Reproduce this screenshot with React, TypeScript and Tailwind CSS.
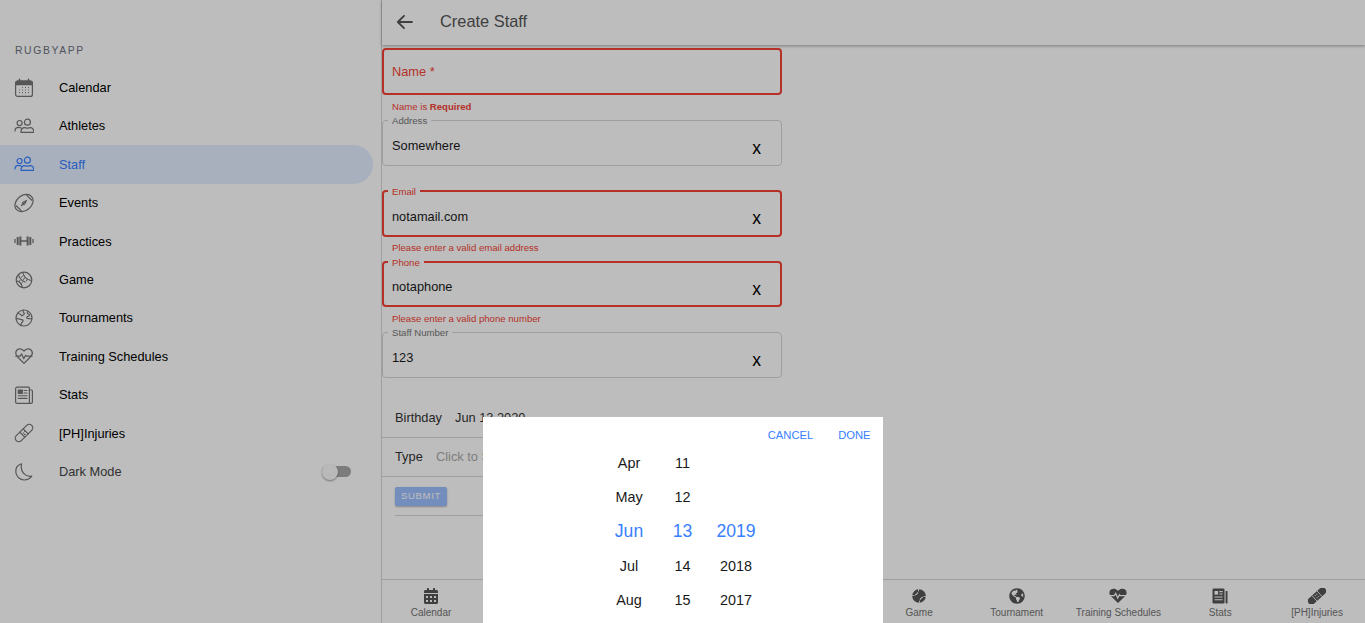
import { ReactNode } from 'react'
import {
  FaBaseballBall,
  FaCalendarAlt,
  FaDumbbell,
  FaFootballBall,
  FaGlobeAmericas,
  FaUserFriends,
} from 'react-icons/fa'

const Ico = ({ children }: { children: ReactNode }) => (
  <svg width="20" height="20" viewBox="0 0 20 20" fill="none" stroke="currentColor" strokeWidth="1.2" strokeLinecap="round" strokeLinejoin="round">
    {children}
  </svg>
)

const CalendarIcon = () => (
  <Ico>
    <rect x="1.6" y="3" width="16.8" height="15.4" rx="2" />
    <path d="M1.8 6.6V5a2 2 0 0 1 2-2h12.4a2 2 0 0 1 2 2v1.6z" fill="currentColor" />
    <path d="M5.5 1.4v2M14.5 1.4v2" strokeWidth="1.6" />
    <path d="M8 9.5h.9M11 9.5h.9M14 9.5h.9M5 12h.9M8 12h.9M11 12h.9M14 12h.9M5 14.6h.9M8 14.6h.9M11 14.6h.9M14 14.6h.9" strokeWidth="1.1" strokeLinecap="butt" />
  </Ico>
)

const PeopleIcon = () => (
  <Ico>
    <circle cx="5.6" cy="7" r="2.5" />
    <circle cx="13.4" cy="6.2" r="3" />
    <path d="M1 15c0-2.4 1.600-3.600 3.600-3.600 1.200 0 2 .2 2.800 .8" />
    <path d="M7 16.400c-.2-2.900 1.600-4.700 3.500-4.700 1 0 1.700 .5 2.900 .5s1.900-.5 2.900-.5c1.900 0 3.700 1.800 3.500 4.700z" />
  </Ico>
)

const FootballIcon = () => (
  <Ico>
    <ellipse cx="10" cy="10" rx="10" ry="7.5" transform="rotate(-40 10 10)" />
    <path d="M12.800 2.400l5 4.800M2.200 12.800l5 4.800" />
    <path d="M7.600 12.400l4.800-4.800M8.600 9.800l1.600 1.600M10 8.400l1.600 1.600" strokeWidth="1.400" />
  </Ico>
)

const DumbbellIcon = () => (
  <Ico>
    <path d="M1 8.500v3M19 8.500v3" strokeWidth="1.300" />
    <path d="M3.700 6v8M6.400 5.500v9M13.600 5.500v9M16.300 6v8" strokeWidth="2" strokeLinecap="butt" />
    <path d="M6.400 10h7.200" strokeWidth="1.300" />
  </Ico>
)

const BaseballIcon = () => (
  <Ico>
    <circle cx="10" cy="10" r="7.800" />
    <path d="M4.500 4.500c.6 3.500 3 6.200 6.500 7.500M9 3c.5 3 2.500 6 8 7.500M3 11c2.500 .6 4.500 2.500 5.400 6.300" />
    <path d="M7 7.500l1.400-1M9.500 9.500l1-1.400M12.500 11l.6-1.500M5 11.500l1-1.200M7 13.500l1.200-1" strokeWidth="1" />
  </Ico>
)

const GlobeIcon = () => (
  <Ico>
    <circle cx="10" cy="10" r="8" />
    <path d="M4 4.800c1 1 1.500 1 2.500 1.500.8 .4 .5 1.400 1.300 1.500 1 .1 1.400-1 2.200-1.600 .8-.6 .2-1.400-.5-1.800-.6-.3-.4-1.700-.2-2.400" />
    <path d="M2.300 11c1.400-.8 2.600-.4 3.900 .2 1.300 .6 2.900 .2 2.900 1.300 0 1.500-1.400 1.700-1.700 3-.2 .9-.6 1.800-.8 2" />
    <path d="M14 3.200c-1.200 1.200-.8 2.500 .4 2.800 .9 .2 1.200 1.200 .8 1.800-.4 .7-1.600 .4-2.200 1.100-.7 .8 .2 1.600 1.200 1.700 1 .1 2 .2 3.500 .1" />
  </Ico>
)

const HeartRateIcon = () => (
  <Ico>
    <path d="M10 17.400L3.700 11C1.300 8.600 1.200 5.800 3 4c1.800-1.800 4.600-1.600 7 1 2.400-2.600 5.200-2.800 7-1 1.800 1.800 1.700 4.600-.7 7z" />
    <path d="M1.800 10.200h4.400l1.400-2.400 2.200 5 1.800-3.500 .8 .9h5.700" />
  </Ico>
)

const NewsIcon = () => (
  <Ico>
    <path d="M3.200 2.200h11.400a.8 .8 0 0 1 .8 .8v15.400H3.200a1.600 1.600 0 0 1-1.600-1.600V3.800a1.600 1.600 0 0 1 1.600-1.600z" />
    <path d="M15.400 5h2a1 1 0 0 1 1 1v11a1.400 1.400 0 0 1-1.400 1.400h-1.600" />
    <rect x="4.300" y="5" width="4" height="3.400" fill="currentColor" />
    <path d="M10 5.500h3M10 8h3M4.300 10.800h8.700M4.300 13.400h8.700" strokeWidth="1.100" />
  </Ico>
)

const BandIcon = () => (
  <Ico>
    <path d="M2.300 12.700L12.700 2.300a3.500 3.500 0 0 1 5 5L7.300 17.700a3.500 3.500 0 0 1-5-5z" />
    <path d="M5.800 9.200l5 5M9.200 5.800l5 5" />
    <path d="M9 10h.6M10.600 8.500h.6M10.400 11.400h.6" />
  </Ico>
)

const MoonIcon = () => (
  <Ico>
    <path d="M7.500 1.800C3.700 3 1.400 6.400 1.800 10.300c.5 4.400 4.200 7.700 8.400 7.700 3 0 5.900-1.400 7.600-3.800-5.800 1-11.800-3.800-10.300-12.400z" />
  </Ico>
)

const SolidHeartRate = () => (
  <svg width="18" height="16" viewBox="0 0 18 16">
    <path d="M9 15L2 8.300C-.2 6.100 0 3.200 1.700 1.700 3.500 .2 6.800 .4 9 2.800c2.200-2.400 5.500-2.600 7.300-1.100C18 3.200 18.200 6.100 16 8.300z" fill="currentColor" />
    <path d="M0 7.600h5.400l1.300-2.300 2 4.700 1.700-3.300.9 .9H18" fill="none" stroke="#fff" strokeWidth="1.200" />
  </svg>
)

const SolidNews = () => (
  <svg width="16" height="16" viewBox="0 0 16 16">
    <rect x=".5" y=".5" width="12" height="15" rx="1.200" fill="currentColor" />
    <rect x="13.600" y="3" width="1.900" height="12.500" rx=".6" fill="currentColor" />
    <rect x="2.500" y="3" width="3.600" height="3.600" fill="#fff" />
    <path d="M7.400 3.600h3.200M7.400 6h3.200M2.500 9h8.100M2.500 11.800h8.100" stroke="#fff" strokeWidth="1.100" />
  </svg>
)

const SolidBand = () => (
  <svg width="18" height="16" viewBox="0 0 18 16">
    <g transform="rotate(-42 9 8)">
      <rect x="-2" y="4.300" width="22" height="7.400" rx="3.600" fill="currentColor" />
      <path d="M5.600 4.300v7.400M12.400 4.300v7.400" stroke="#fff" strokeWidth=".8" />
      <path d="M7.400 6.600h.9M9.600 6.600h.9M7.400 9.400h.9M9.600 9.400h.9" stroke="#fff" strokeWidth="1.100" />
    </g>
  </svg>
)

const menu = [
  { label: 'Calendar', icon: <CalendarIcon /> },
  { label: 'Athletes', icon: <PeopleIcon /> },
  { label: 'Staff', icon: <PeopleIcon />, active: true },
  { label: 'Events', icon: <FootballIcon /> },
  { label: 'Practices', icon: <DumbbellIcon /> },
  { label: 'Game', icon: <BaseballIcon /> },
  { label: 'Tournaments', icon: <GlobeIcon /> },
  { label: 'Training Schedules', icon: <HeartRateIcon /> },
  { label: 'Stats', icon: <NewsIcon /> },
  { label: '[PH]Injuries', icon: <BandIcon /> },
]

const tabs = [
  { label: 'Calendar', icon: <FaCalendarAlt size={16} />, width: 'w-[98px]' },
  { label: 'Athletes', icon: <FaUserFriends size={16} />, width: 'flex-1' },
  { label: 'Staff', icon: <FaUserFriends size={16} />, width: 'flex-1' },
  { label: 'Events', icon: <FaFootballBall size={16} />, width: 'flex-1' },
  { label: 'Practices', icon: <FaDumbbell size={16} />, width: 'flex-1' },
  { label: 'Game', icon: <FaBaseballBall size={14} className="rotate-45" />, width: 'flex-1' },
  { label: 'Tournament', icon: <FaGlobeAmericas size={16} />, width: 'flex-1' },
  { label: 'Training Schedules', icon: <SolidHeartRate />, width: 'w-[106px]' },
  { label: 'Stats', icon: <SolidNews />, width: 'flex-1' },
  { label: '[PH]Injuries', icon: <SolidBand />, width: 'w-[96px]' },
]

const Sidebar = () => (
  <div className="w-[382px] h-full shrink-0 border-r border-[#d8d8d8] flex flex-col">
    <div className="h-[68.5px] shrink-0 pt-[45px] pl-[15px] text-[10.4px] leading-[12px] tracking-[1.6px] text-[#6b7280]">RUGBYAPP</div>
    {menu.map((m) => (
      <div
        key={m.label}
        className={
          'w-[373px] h-[38.4px] shrink-0 flex items-center pl-[14px] rounded-r-[20px] ' +
          (m.active ? 'bg-[#3880ff]/14 text-[#3880ff]' : 'text-[#757575]')
        }
      >
        {m.icon}
        <span className={'ml-[25px] text-[12.8px] ' + (m.active ? 'text-[#3880ff]' : 'text-black')}>{m.label}</span>
      </div>
    ))}
    <div className="w-[373px] h-[38.4px] shrink-0 flex items-center pl-[14px] text-[#757575]">
      <MoonIcon />
      <span className="ml-[25px] text-[12.8px] text-[#444]">Dark Mode</span>
      <div className="relative ml-auto mr-[22px] w-[29px] h-[11px] rounded-full bg-[#a8a8a8]">
        <div className="absolute left-0 top-[-2.5px] w-[16px] h-[16px] rounded-full bg-[#fafafa] shadow-[0_1px_2px_rgba(0,0,0,.4)]" />
      </div>
    </div>
  </div>
)

type FieldProps = { label: string; value?: string; error?: ReactNode; outer: string; inner: string; errorPad?: string }

const Field = ({ label, value, error, outer, inner, errorPad = 'pt-[6px]' }: FieldProps) => (
  <div className={'w-[400px] shrink-0 ' + outer}>
    <div
      className={
        'relative rounded-[4px] flex items-center ' + inner + ' ' +
        (error ? 'pl-[8px] border-2 border-[#f44336]' : 'pl-[9px] border border-[#d6d6d6]')
      }
    >
      {value !== undefined ? (
        <>
          <span
            className={
              'absolute px-[4px] bg-white text-[9.6px] leading-[12px] ' +
              (error ? 'left-[4px] top-[-6px] text-[#f44336]' : 'left-[5px] top-[-6px] text-[#757575]')
            }
          >
            {label}
          </span>
          <span className="text-[12.8px] mt-[6px] text-[#1a1a1a]">{value}</span>
          <span className={'ml-auto mt-[11px] text-[17.6px] leading-none text-black ' + (error ? 'mr-[19px]' : 'mr-[20px]')}>x</span>
        </>
      ) : (
        <span className="text-[12.8px] text-[#f44336]">{label}</span>
      )}
    </div>
    {error && <div className={'pl-[10px] text-[9.6px] leading-[12px] text-[#f44336] ' + errorPad}>{error}</div>}
  </div>
)

const Main = () => (
  <div className="flex-1 min-w-0 h-full flex flex-col">
    <div className="h-[45px] shrink-0 flex items-center pl-[14px] pb-[2px] shadow-[0_1px_3px_rgba(0,0,0,.35)] text-[#555]">
      <svg width="18" height="18" viewBox="0 0 18 18" fill="none" stroke="currentColor" strokeWidth="1.8" strokeLinecap="round" strokeLinejoin="round">
        <path d="M16 9H2M8 2.800L1.800 9 8 15.200" />
      </svg>
      <span className="ml-[26px] text-[16.4px]">Create Staff</span>
    </div>
    <div className="flex-1 min-h-0 flex flex-col pt-[3px]">
      <Field label="Name *" error={<>Name is <b>Required</b></>} outer="h-[72px]" inner="h-[47px]" />
      <Field label="Address" value="Somewhere" outer="h-[70px]" inner="h-[46px]" />
      <Field label="Email" value="notamail.com" error="Please enter a valid email address" errorPad="pt-[4.5px]" outer="h-[71px]" inner="h-[47px]" />
      <Field label="Phone" value="notaphone" error="Please enter a valid phone number" outer="h-[71px]" inner="h-[46px]" />
      <Field label="Staff Number" value="123" outer="h-[66px]" inner="h-[46px]" />
      <div className="w-[400px] h-[40px] shrink-0 flex items-center pl-[13px] border-b border-[#d6d6d6] text-[12.8px] text-[#333]">
        <span className="w-[60px]">Birthday</span>
        <span>Jun 13 2020</span>
      </div>
      <div className="w-[400px] h-[39px] shrink-0 flex items-center pl-[13px] border-b border-[#d6d6d6] text-[12.8px] text-[#333]">
        <span className="w-[41px]">Type</span>
        <span className="text-[#aaa]">Click to Select</span>
      </div>
      <div className="w-[400px] ml-[13px] mt-[10px] pb-[9px] border-b border-[#d6d6d6]">
        <button className="block w-[52px] h-[19px] rounded-[2px] bg-[#9cc0ff] text-white text-[9.6px] tracking-[.6px] shadow-[0_1px_2px_rgba(0,0,0,.3)]">
          SUBMIT
        </button>
      </div>
    </div>
    <div className="h-[44px] shrink-0 border-t border-[#d6d6d6] flex">
      {tabs.map((t) => (
        <div key={t.label} className={t.width + ' flex flex-col items-center pt-[8px] text-[#555]'}>
          <div className="h-[16px] flex items-center justify-center">{t.icon}</div>
          <span className="mt-[3px] text-[10px] leading-[12px] text-[#737373] whitespace-nowrap">{t.label}</span>
        </div>
      ))}
    </div>
  </div>
)

const months = ['Apr', 'May', 'Jun', 'Jul', 'Aug']
const days = ['11', '12', '13', '14', '15']
const years = ['', '', '2019', '2018', '2017']

const PickerCol = ({ items }: { items: string[] }) => (
  <div className="w-[53.5px]">
    {items.map((v, i) => (
      <div
        key={i}
        className={
          'h-[34.3px] flex items-center justify-center ' +
          (i === 2 ? 'pb-[2px] text-[17.6px] text-[#3880ff]' : 'text-[14.4px] text-[#1a1a1a]')
        }
      >
        {v}
      </div>
    ))}
  </div>
)

const Picker = () => (
  <div className="fixed inset-0 bg-black/26 flex justify-center items-end">
    <div className="w-[400px] h-[206px] bg-white overflow-hidden">
      <div className="h-[29.4px] flex items-end justify-end gap-[25px] pr-[12px] pb-[4px] text-[11.2px] leading-[13px] text-[#3880ff]">
        <span>CANCEL</span>
        <span>DONE</span>
      </div>
      <div className="flex justify-center">
        <PickerCol items={months} />
        <PickerCol items={days} />
        <PickerCol items={years} />
      </div>
    </div>
  </div>
)

const App = () => {
  return (
    <div className="relative flex w-full h-[623px] overflow-hidden bg-white font-['Liberation_Sans',Arial,sans-serif]">
      <Sidebar />
      <Main />
      <Picker />
    </div>
  )
}

export default App
